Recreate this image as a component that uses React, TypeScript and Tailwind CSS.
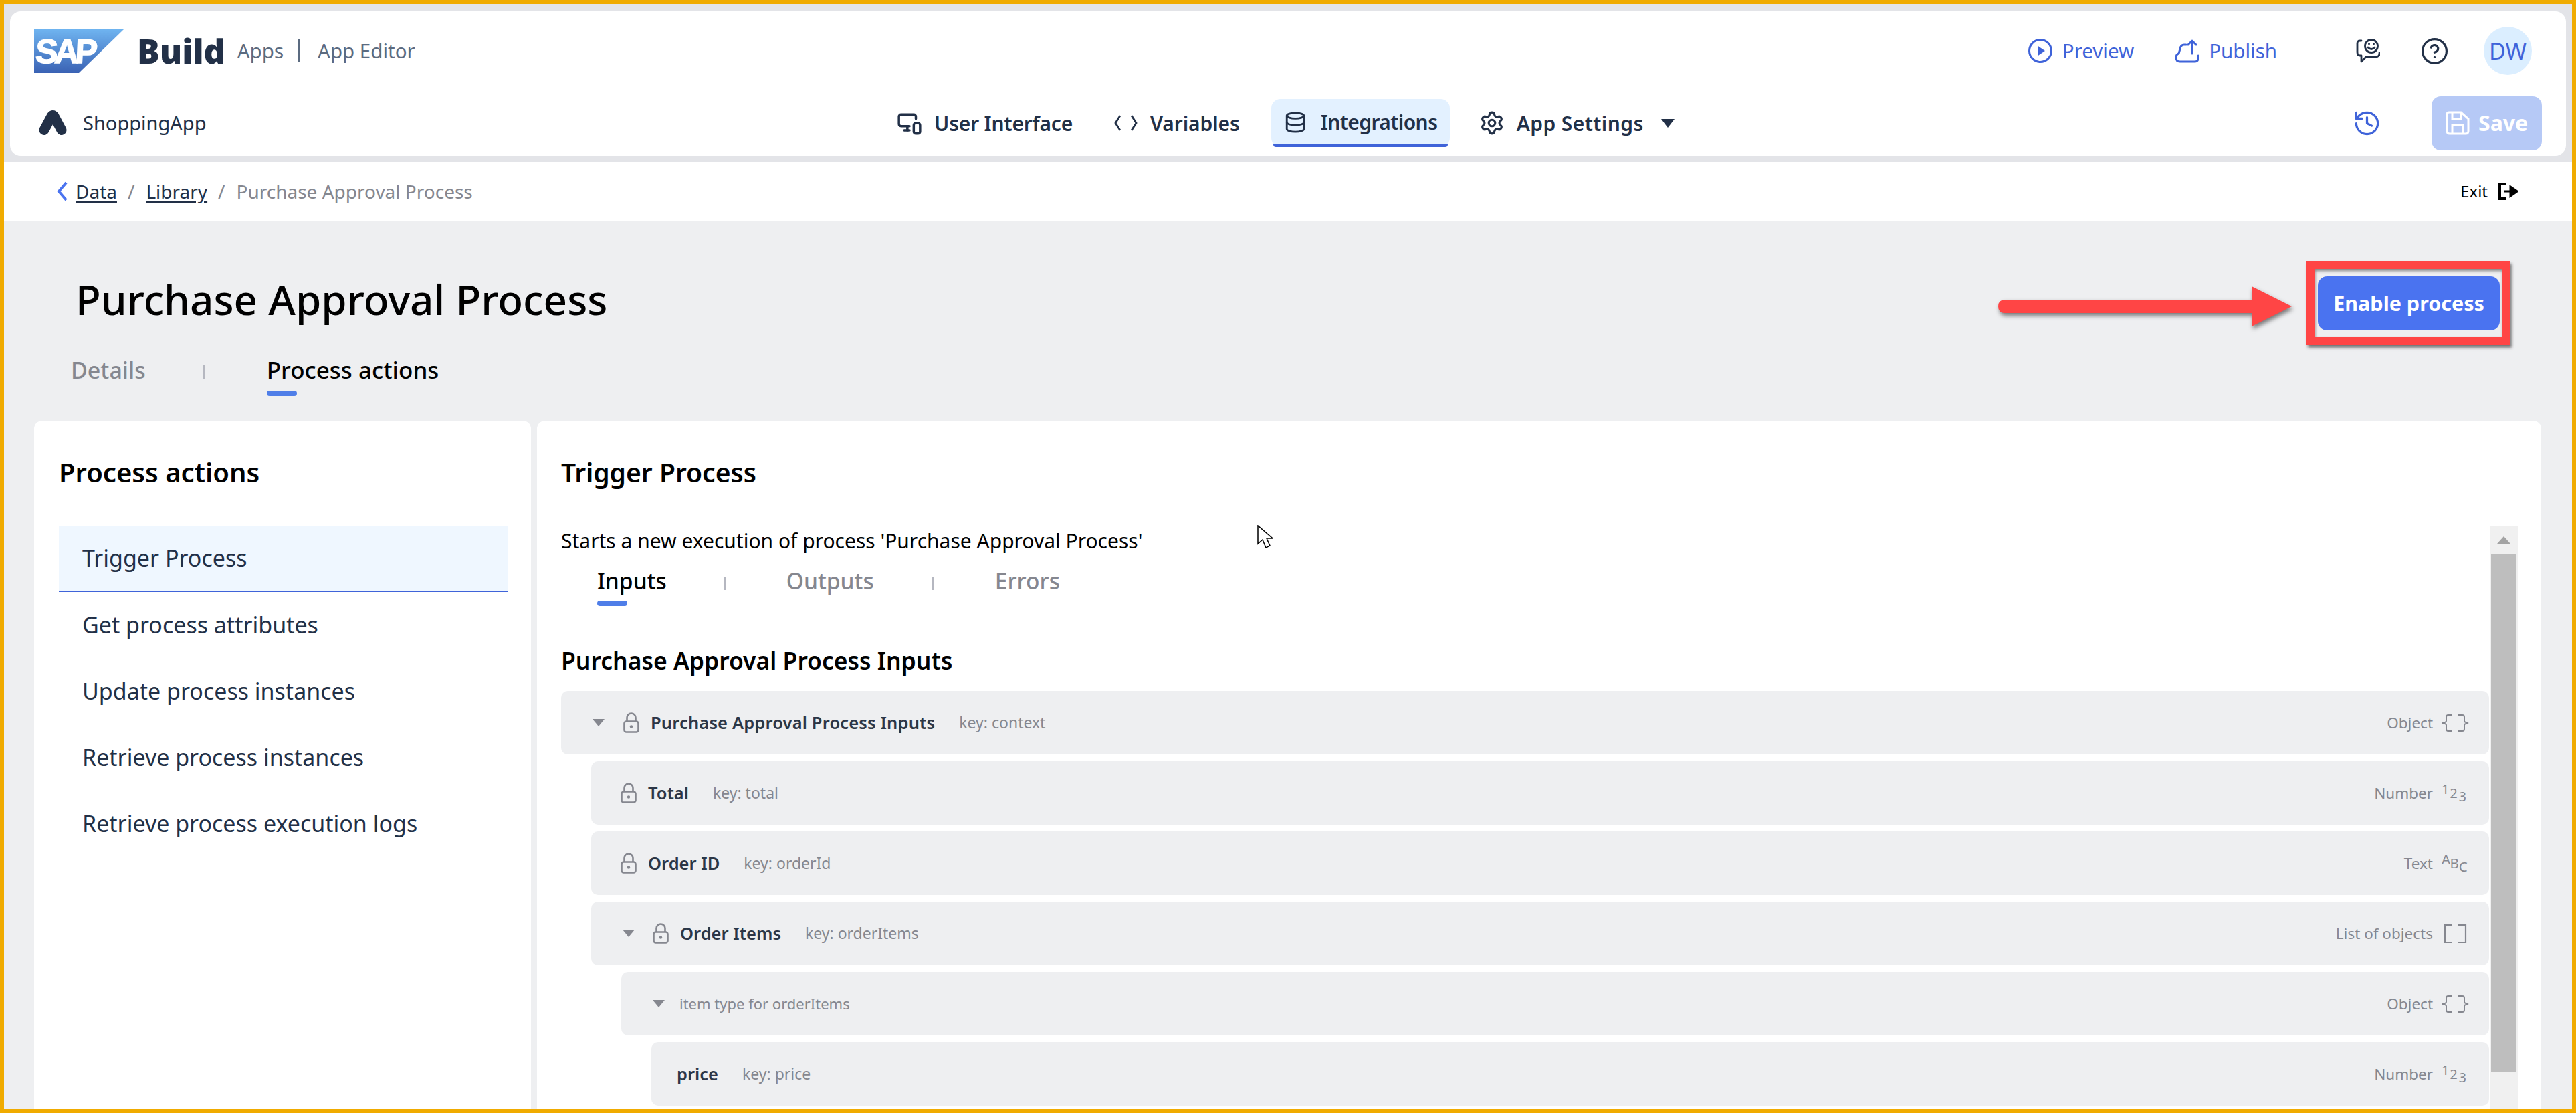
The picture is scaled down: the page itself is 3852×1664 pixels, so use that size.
import type { ReactNode } from 'react';
import { CircleHelp, Database, History, MonitorSmartphone, Settings } from 'lucide-react';

const menuItems = ['Get process attributes', 'Update process instances', 'Retrieve process instances', 'Retrieve process execution logs'];

type Kind = 'object' | 'number' | 'text' | 'list';

function Caret() {
  return (
    <svg width="18" height="11" viewBox="0 0 18 11" className="shrink-0">
      <path d="M0 0h18L9 11z" fill="#85878f" />
    </svg>
  );
}

function Lock({ className = '' }: { className?: string }) {
  return (
    <svg width="24" height="31" viewBox="0 0 24 31" fill="none" stroke="#85878f" strokeWidth="2.6" className={`shrink-0 ${className}`}>
      <path d="M5.5 14V8a6.5 6.5 0 0 1 13 0v6" />
      <rect x="1.5" y="13.5" width="21" height="16" rx="3" />
      <circle cx="12" cy="21.5" r="2.2" fill="#85878f" stroke="none" />
    </svg>
  );
}

function TypeIcon({ kind }: { kind: Kind }) {
  if (kind === 'object') {
    return (
      <svg width="41" height="26" viewBox="0 0 41 26" fill="none" stroke="#85878f" strokeWidth="2">
        <path d="M16 1H10Q7 1 7 4V10Q7 12 1 13Q7 14 7 16V22Q7 25 10 25H16" />
        <path d="M25 1H31Q34 1 34 4V10Q34 12 40 13Q34 14 34 16V22Q34 25 31 25H25" />
      </svg>
    );
  }
  if (kind === 'list') {
    return (
      <svg width="41" height="28" viewBox="0 0 41 28" fill="none" stroke="#85878f" strokeWidth="2.2">
        <path d="M16 1H5V27H16" />
        <path d="M25 1H36V27H25" />
      </svg>
    );
  }
  const [a, b, c] = kind === 'number' ? ['1', '2', '3'] : ['A', 'B', 'C'];
  return (
    <svg width="46" height="42" viewBox="0 -6 46 42" fill="#85878f" fontFamily="'Noto Sans', sans-serif" fontSize={kind === 'number' ? 22 : 23}>
      <text x="0" y="16">{a}</text>
      <text x="14" y="23">{b}</text>
      <text x="29" y="29">{c}</text>
    </svg>
  );
}

function FieldRow({
  className, caret, lockGap, lock, label, fieldKey, type, kind, muted,
}: {
  className: string; caret?: boolean; lockGap?: string; lock?: boolean; label: ReactNode; fieldKey?: string; type: string; kind: Kind; muted?: boolean;
}) {
  return (
    <div className={`flex h-[95px] items-center rounded-[10px] bg-[#eeeff1] pr-[30px] ${className}`}>
      {caret && <Caret />}
      {lock && <Lock className={lockGap} />}
      {muted ? (
        <span className="ml-[22px] whitespace-nowrap text-[22px] text-[#85878f]">{label}</span>
      ) : (
        <span className={`whitespace-nowrap text-[25.5px] font-semibold text-[#2c3646] ${lock ? 'ml-[17px]' : ''}`}>{label}</span>
      )}
      {fieldKey && <span className="ml-[36px] whitespace-nowrap text-[23px] text-[#85878f]">{fieldKey}</span>}
      <span className="ml-auto whitespace-nowrap text-[22.5px] text-[#85878f]">{type}</span>
      <span className="ml-[13px] flex w-[41px]"><TypeIcon kind={kind} /></span>
    </div>
  );
}

function NavItem({ icon, label, className = '', children }: { icon: ReactNode; label: string; className?: string; children?: ReactNode }) {
  return (
    <div className={`flex items-center whitespace-nowrap text-[30px] font-semibold text-[#223047] ${className}`}>
      {icon}
      {label}
      {children}
    </div>
  );
}

export default function App() {
  return (
    <div className="flex h-[1664px] w-[3852px] flex-col overflow-hidden border-[6px] border-[#f0ab00] bg-[#eeeff1] font-['Noto_Sans',sans-serif]">
      <div className="bg-[#e3e4e8] px-[9px] pb-[9px] pt-[11px]">
        <header className="h-[216px] rounded-[16px] bg-white">
          <div className="flex h-[118px] items-center pl-[36px] pr-[51px]">
            <svg width="134" height="65" viewBox="0 0 134 65" className="shrink-0">
              <defs>
                <linearGradient id="sapGrad" x1="0" y1="0" x2="0" y2="1">
                  <stop offset="0" stopColor="#6fb4f0" />
                  <stop offset="1" stopColor="#3a62b4" />
                </linearGradient>
              </defs>
              <path d="M0 0H134L67 65H0z" fill="url(#sapGrad)" />
              <text x="4" y="50" fill="#fff" stroke="#fff" strokeWidth="1.6" fontFamily="'Liberation Sans', sans-serif" fontWeight="700" fontSize="50" letterSpacing="-5" transform="skewX(-3)">SAP</text>
            </svg>
            <span className="ml-[20px] text-[50px] font-black leading-none text-[#223047]">Build</span>
            <span className="ml-[18px] text-[29.5px] text-[#5b6b80]">Apps</span>
            <span className="ml-[22px] h-[34px] w-[2px] bg-[#5b6b80]" />
            <span className="ml-[27px] text-[29.5px] text-[#5b6b80]">App Editor</span>
            <div className="ml-auto flex items-center">
              <svg width="36" height="36" viewBox="0 0 36 36" fill="none" className="shrink-0">
                <circle cx="18" cy="18" r="16.5" stroke="#3f63d9" strokeWidth="3" />
                <path d="M14 10.5 25 18 14 25.5z" fill="#3f63d9" />
              </svg>
              <span className="ml-[15px] text-[29.5px] text-[#3f63d9]">Preview</span>
              <svg width="36" height="36" viewBox="0 0 36 36" fill="none" stroke="#3f63d9" strokeWidth="3" strokeLinecap="round" strokeLinejoin="round" className="ml-[61px] shrink-0">
                <path d="M17 9H14Q9 9 8 15L6 22Q2 23 2 28Q2 34 8 34H30Q35 34 35 29V25" />
                <path d="M26 22V3M20 9l6-6 6 6" />
              </svg>
              <span className="ml-[15px] text-[29.5px] text-[#3f63d9]">Publish</span>
              <svg width="36" height="36" viewBox="0 0 36 36" fill="none" stroke="#223047" strokeWidth="2.8" strokeLinecap="round" strokeLinejoin="round" className="ml-[118px] shrink-0">
                <circle cx="23" cy="11" r="9.5" />
                <path d="M18 13q5 5 10 0" />
                <path d="M19.5 7.5v.5M26.5 7.5v.5" />
                <path d="M8 3H6Q2 3 2 7V20Q2 25 6 25H8V34L15 27H29Q35 27 35 22V21" />
              </svg>
              <CircleHelp size={43} strokeWidth={1.8} color="#223047" className="ml-[60px] shrink-0" />
              <span className="ml-[52px] flex h-[72px] w-[72px] items-center justify-center rounded-full bg-[#dbeeff] text-[34px] text-[#3f63d9]">DW</span>
            </div>
          </div>
          <div className="grid h-[98px] grid-cols-[1326px_1fr_auto] items-center pr-[36px]">
            <div className="flex items-center pl-[42px]">
              <svg width="44" height="38" viewBox="0 0 44 38" fill="none" stroke="#223047" strokeWidth="15" strokeLinecap="round" strokeLinejoin="round" className="shrink-0">
                <path d="M9 29.5 20 9Q22 6 24 9L35 29.5" />
              </svg>
              <span className="ml-[23px] text-[29px] text-[#223047]">ShoppingApp</span>
            </div>
            <nav className="flex items-center">
              <NavItem className="tracking-[-0.2px]" icon={<MonitorSmartphone size={38} strokeWidth={2.2} className="mr-[18px] shrink-0" />} label="User Interface" />
              <NavItem
                className="ml-[61px] tracking-[-0.1px]"
                icon={
                  <svg width="37" height="26" viewBox="0 0 37 26" fill="none" stroke="#223047" strokeWidth="2.8" className="mr-[18px] shrink-0">
                    <path d="M10 2 3 13l7 11M27 2l7 11-7 11" />
                  </svg>
                }
                label="Variables"
              />
              <NavItem
                className="relative ml-[47px] mr-[44px] h-[72px] w-[267px] shrink-0 rounded-[14px] bg-[#e3f1ff] pb-[3px] pl-[19px] tracking-[-0.6px]"
                icon={<Database size={34} strokeWidth={2} className="mr-[21px] shrink-0" />}
                label="Integrations"
              >
                <span className="absolute bottom-0 left-[3px] right-[3px] h-[5px] rounded-b-[4px] bg-[#3f63d9]" />
              </NavItem>
              <NavItem className="tracking-[0.4px]" icon={<Settings size={38} strokeWidth={2} className="mr-[18px] shrink-0" />} label="App Settings" />
              <svg width="20" height="13" viewBox="0 0 20 13" className="ml-[26px] shrink-0">
                <path d="M0 0h20L10 13z" fill="#223047" />
              </svg>
            </nav>
            <div className="flex items-center">
              <History size={43} strokeWidth={1.8} color="#3f63d9" className="mr-[75px] shrink-0" />
              <div className="flex h-[81px] w-[165px] items-center rounded-[14px] bg-[#b6c9f6] pl-[21px] text-[32px] font-bold text-white">
                <svg width="36" height="36" viewBox="0 0 36 36" fill="none" stroke="#fff" strokeWidth="3" className="mr-[13px] shrink-0">
                  <path d="M5 2H23L34 12V30Q34 34 30 34H6Q2 34 2 30V5Q2 2 5 2z" />
                  <path d="M10 2V12H23V2M10 34V21H26V34" />
                </svg>
                Save
              </div>
            </div>
          </div>
        </header>
      </div>

      <div className="flex h-[88px] shrink-0 items-center justify-between bg-white pl-[78px] pr-[81px]">
        <div className="flex items-center text-[28px]">
          <svg width="18" height="30" viewBox="0 0 18 30" fill="none" stroke="#4a73f0" strokeWidth="4" className="shrink-0">
            <path d="M15 2 4 15l11 13" />
          </svg>
          <span className="ml-[11px] text-[#223047] underline underline-offset-4">Data</span>
          <span className="ml-[16px] text-[#85878f]">/</span>
          <span className="ml-[17px] text-[#223047] underline underline-offset-4">Library</span>
          <span className="ml-[16px] text-[#85878f]">/</span>
          <span className="ml-[17px] text-[#85878f]">Purchase Approval Process</span>
        </div>
        <div className="flex items-center text-[24px] text-black">
          Exit
          <svg width="30" height="26" viewBox="0 0 30 26" fill="none" className="ml-[15px] shrink-0">
            <path d="M13 2H3V24H13" stroke="#000" strokeWidth="4" />
            <path d="M9 13h10M19 6l10 7-10 7z" fill="#000" stroke="#000" strokeWidth="3" />
          </svg>
        </div>
      </div>

      <div className="flex min-h-0 flex-1 flex-col">
        <div className="flex items-start justify-between pl-[107px] pr-[108px] pt-[83px]">
          <h1 className="text-[62px] font-medium leading-[68px] text-black">Purchase Approval Process</h1>
          <div className="relative">
            <div className="flex h-[81px] w-[272px] items-center justify-center rounded-[14px] bg-[#4a73f0] text-[30.5px] font-bold text-white">Enable process</div>
            <div className="absolute -bottom-[22px] -left-[17px] -right-[16px] -top-[23px] border-[12px] border-[#ff4545] shadow-[2px_4px_4px_rgba(0,0,0,0.5),inset_1px_3px_4px_rgba(0,0,0,0.45)]" />
            <svg width="439" height="60" viewBox="0 0 439 60" className="absolute right-[calc(100%+39px)] top-[15px] overflow-visible drop-shadow-[2px_4px_3px_rgba(0,0,0,0.5)]">
              <path d="M10 20H379V0L439 30 379 60V40H10Q0 40 0 30T10 20z" fill="#ff4545" />
            </svg>
          </div>
        </div>

        <div className="mt-[34px] flex pl-[100px] font-medium leading-[50px]">
          <span className="text-[34px] text-[#85878f]">Details</span>
          <span className="ml-[85px] mt-[18px] h-[20px] w-[3px] bg-[#b5b7c0]" />
          <div className="ml-[93px] flex flex-col">
            <span className="text-[35px] text-black">Process actions</span>
            <span className="mt-[6px] h-[8px] w-[45px] rounded-full bg-[#4f7ee8]" />
          </div>
        </div>

        <div className="mt-[37px] flex min-h-0 flex-1 gap-[9px] pl-[45px] pr-[46px]">
          <aside className="w-[743px] shrink-0 rounded-t-[12px] bg-white pl-[37px] pt-[52px]">
            <h2 className="text-[40px] font-semibold leading-[50px] text-black">Process actions</h2>
            <div className="mt-[55px] w-[671px]">
              <div className="flex h-[99px] items-center border-b-2 border-[#3f63d9] bg-[#eff7ff] pl-[35px] text-[34px] text-[#223047]">Trigger Process</div>
              {menuItems.map((item) => (
                <div key={item} className="flex h-[99px] items-center pl-[35px] text-[34px] text-[#223047]">{item}</div>
              ))}
            </div>
          </aside>

          <main className="flex min-w-0 flex-1 flex-col overflow-hidden rounded-t-[12px] bg-white pl-[36px] pr-[35px] pt-[52px]">
            <h2 className="text-[39px] font-semibold leading-[50px] text-black">Trigger Process</h2>
            <div className="mt-[55px] flex min-h-0 flex-1">
              <div className="relative min-w-0 flex-1">
                <p className="text-[30px] leading-[45px] text-black">Starts a new execution of process 'Purchase Approval Process'</p>
                <svg width="24" height="36" viewBox="0 0 24 36" className="absolute left-[1041px] top-[-1px]">
                  <path d="M1 1V28L8 22 13 34 19 31 14 20H23z" fill="#fff" stroke="#000" strokeWidth="1.5" />
                </svg>
                <div className="ml-[54px] mt-[12px] flex text-[33.5px] font-medium leading-[50px]">
                  <div className="flex flex-col">
                    <span className="text-black">Inputs</span>
                    <span className="mt-[5px] h-[8px] w-[45px] rounded-full bg-[#4f7ee8]" />
                  </div>
                  <span className="ml-[85px] mt-[19px] h-[20px] w-[3px] bg-[#b5b7c0]" />
                  <span className="ml-[91px] text-[#85878f]">Outputs</span>
                  <span className="ml-[87px] mt-[19px] h-[20px] w-[3px] bg-[#b5b7c0]" />
                  <span className="ml-[91px] text-[#85878f]">Errors</span>
                </div>
                <h3 className="mt-[56px] text-[35.5px] font-semibold leading-[50px] text-black">Purchase Approval Process Inputs</h3>
                <div className="mt-[21px] flex flex-col gap-[10px]">
                  <FieldRow className="pl-[47px]" caret lock lockGap="ml-[28px]" label={<span className="tracking-[0.15px]">Purchase Approval Process Inputs</span>} fieldKey="key: context" type="Object" kind="object" />
                  <FieldRow className="ml-[45px] pl-[44px]" lock label="Total" fieldKey="key: total" type="Number" kind="number" />
                  <FieldRow className="ml-[45px] pl-[44px]" lock label="Order ID" fieldKey="key: orderId" type="Text" kind="text" />
                  <FieldRow className="ml-[45px] pl-[47px]" caret lock lockGap="ml-[27px]" label="Order Items" fieldKey="key: orderItems" type="List of objects" kind="list" />
                  <FieldRow className="ml-[90px] pl-[47px]" caret muted label="item type for orderItems" type="Object" kind="object" />
                  <FieldRow className="ml-[135px] pl-[38px]" label="price" fieldKey="key: price" type="Number" kind="number" />
                </div>
              </div>
              <div className="ml-px flex w-[42px] shrink-0 flex-col bg-[#f0f0f0]">
                <div className="flex h-[42px] items-center justify-center">
                  <svg width="20" height="11" viewBox="0 0 20 11"><path d="M10 0 20 11H0z" fill="#a3a3a3" /></svg>
                </div>
                <div className="mx-[2px] h-[775px] bg-[#bebebe]" />
              </div>
            </div>
          </main>
        </div>
      </div>
    </div>
  );
}
